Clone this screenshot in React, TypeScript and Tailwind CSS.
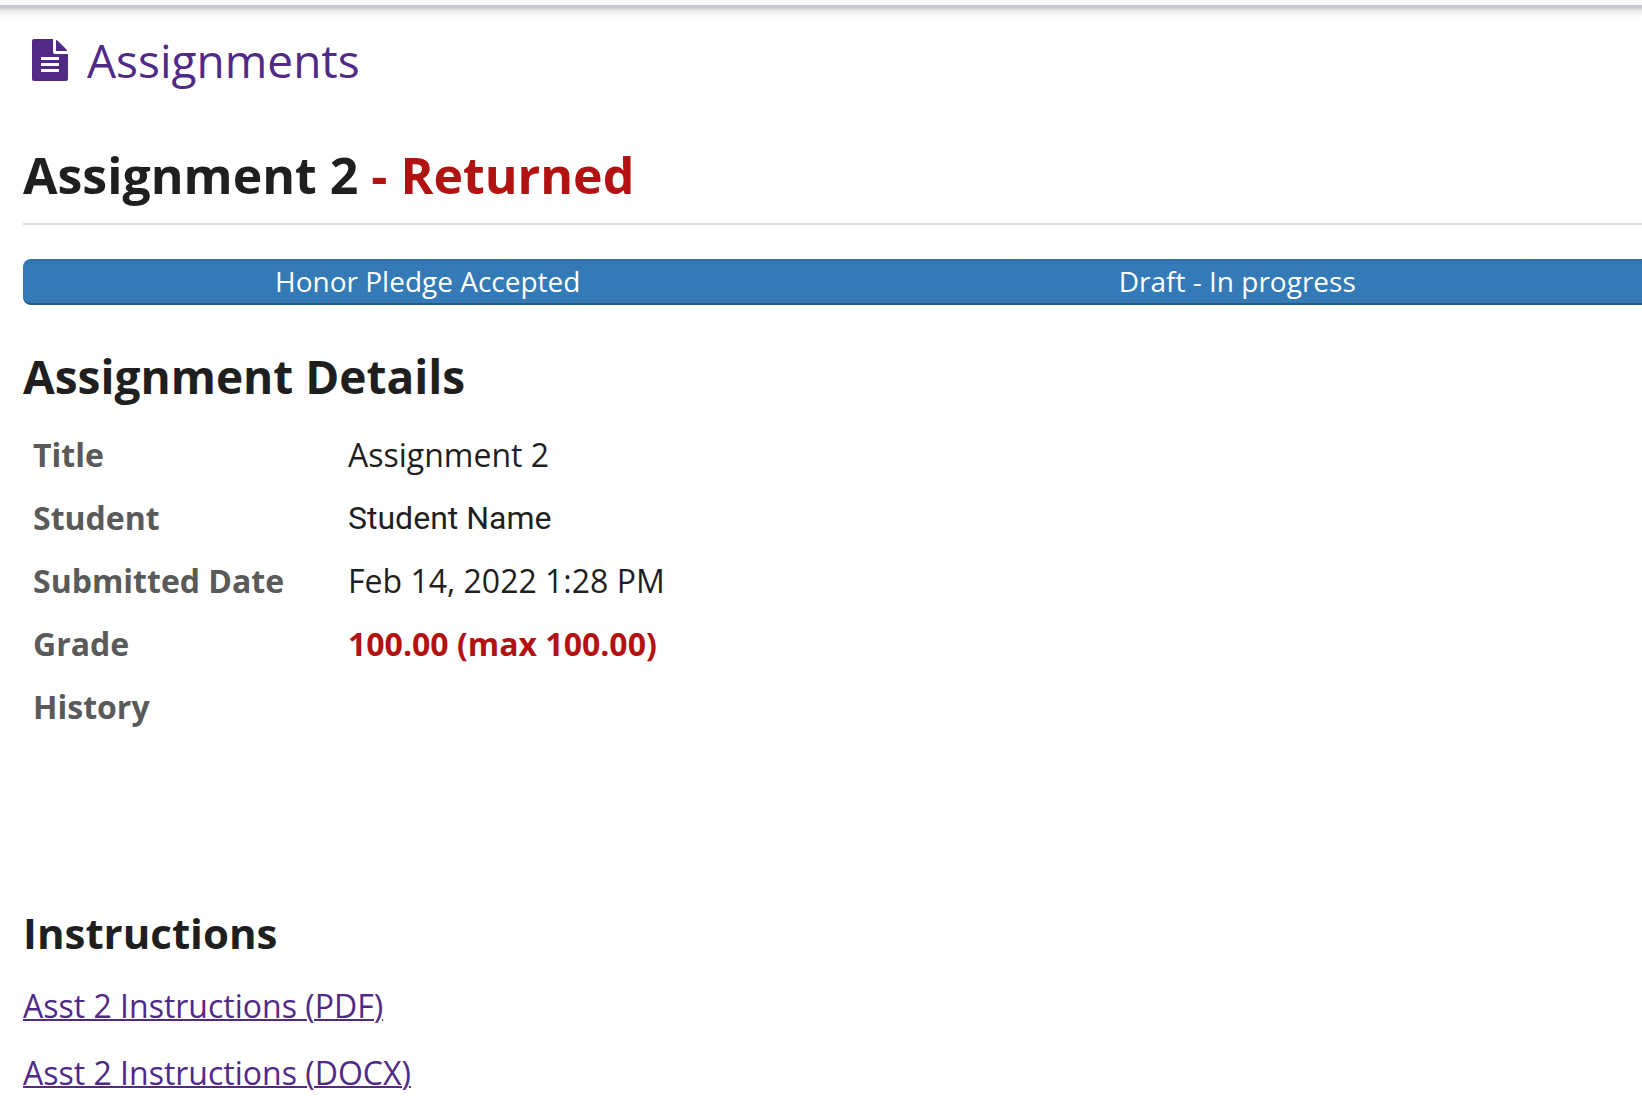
const rows = [
  { label: 'Title', value: 'Assignment 2', style: '' },
  { label: 'Student', value: 'Student Name', style: "font-['Roboto',sans-serif]" },
  { label: 'Submitted Date', value: 'Feb 14, 2022 1:28 PM', style: '' },
  { label: 'Grade', value: '100.00 (max 100.00)', style: 'font-bold text-[#b31212]' },
  { label: 'History', value: '', style: '' },
];

export default function App() {
  return (
    <div className="min-h-screen overflow-x-hidden bg-white font-['Open_Sans',sans-serif] text-[32px] text-[#1f1f1f]">
      <header className="h-[18px] border-t-[5px] border-[#fafafa] bg-linear-to-b from-[#c8c8ce] from-20% via-[#eeeeef] via-45% to-white" />
      <main className="pl-[23px]">
        <a href="#assignments" className="flex w-fit items-center gap-[19px] pl-[9px] text-[46px] leading-[84px] text-[#512a88]">
          <svg width="36" height="42" viewBox="0 0 36 42" fill="none" aria-hidden="true">
            <path d="M2 0H21V13Q21 15 23 15H36V40Q36 42 34 42H2Q0 42 0 40V2Q0 0 2 0Z" fill="currentColor" />
            <path d="M24 1Q25 1 26 2L34 10Q35 11 35 12H24Z" fill="currentColor" />
            <path d="M9 19.5H27M9 25.5H27M9 31.5H27" stroke="white" strokeWidth="3" />
          </svg>
          Assignments
        </a>
        <h1 className="mt-[33px] border-b-2 border-[#dfdfdf] pb-[8px] text-[50px] leading-[80px] font-bold">
          Assignment 2 <span className="text-[#b31212]">- Returned</span>
        </h1>
        <div className="mt-[34px] grid grid-cols-2 items-center overflow-hidden rounded-l-[8px] border-b-2 border-[#235a8c] bg-linear-to-b from-[#2e6dac] to-[#337ab7] to-[5px] pt-px text-center text-[28px] leading-[43px] text-white">
          <span>Honor Pledge Accepted</span>
          <span>Draft - In progress</span>
        </div>
        <h2 className="mt-[39px] text-[46px] leading-[64px] font-bold">Assignment Details</h2>
        <table className="mt-[15px] text-left">
          <tbody>
            {rows.map((row) => (
              <tr key={row.label} className="h-[63px]">
                <th scope="row" className="w-[325px] pl-[10px] font-bold text-[#5a5a5a]">{row.label}</th>
                <td className={row.style}>{row.value}</td>
              </tr>
            ))}
          </tbody>
        </table>
        <h2 className="mt-[165px] text-[42px] leading-[60px] font-bold">Instructions</h2>
        <ul className="mt-[9px] leading-[67px] text-[#512a88]">
          <li><a href="#pdf" className="underline decoration-2">Asst 2 Instructions (PDF)</a></li>
          <li><a href="#docx" className="underline decoration-2">Asst 2 Instructions (DOCX)</a></li>
        </ul>
      </main>
    </div>
  );
}
